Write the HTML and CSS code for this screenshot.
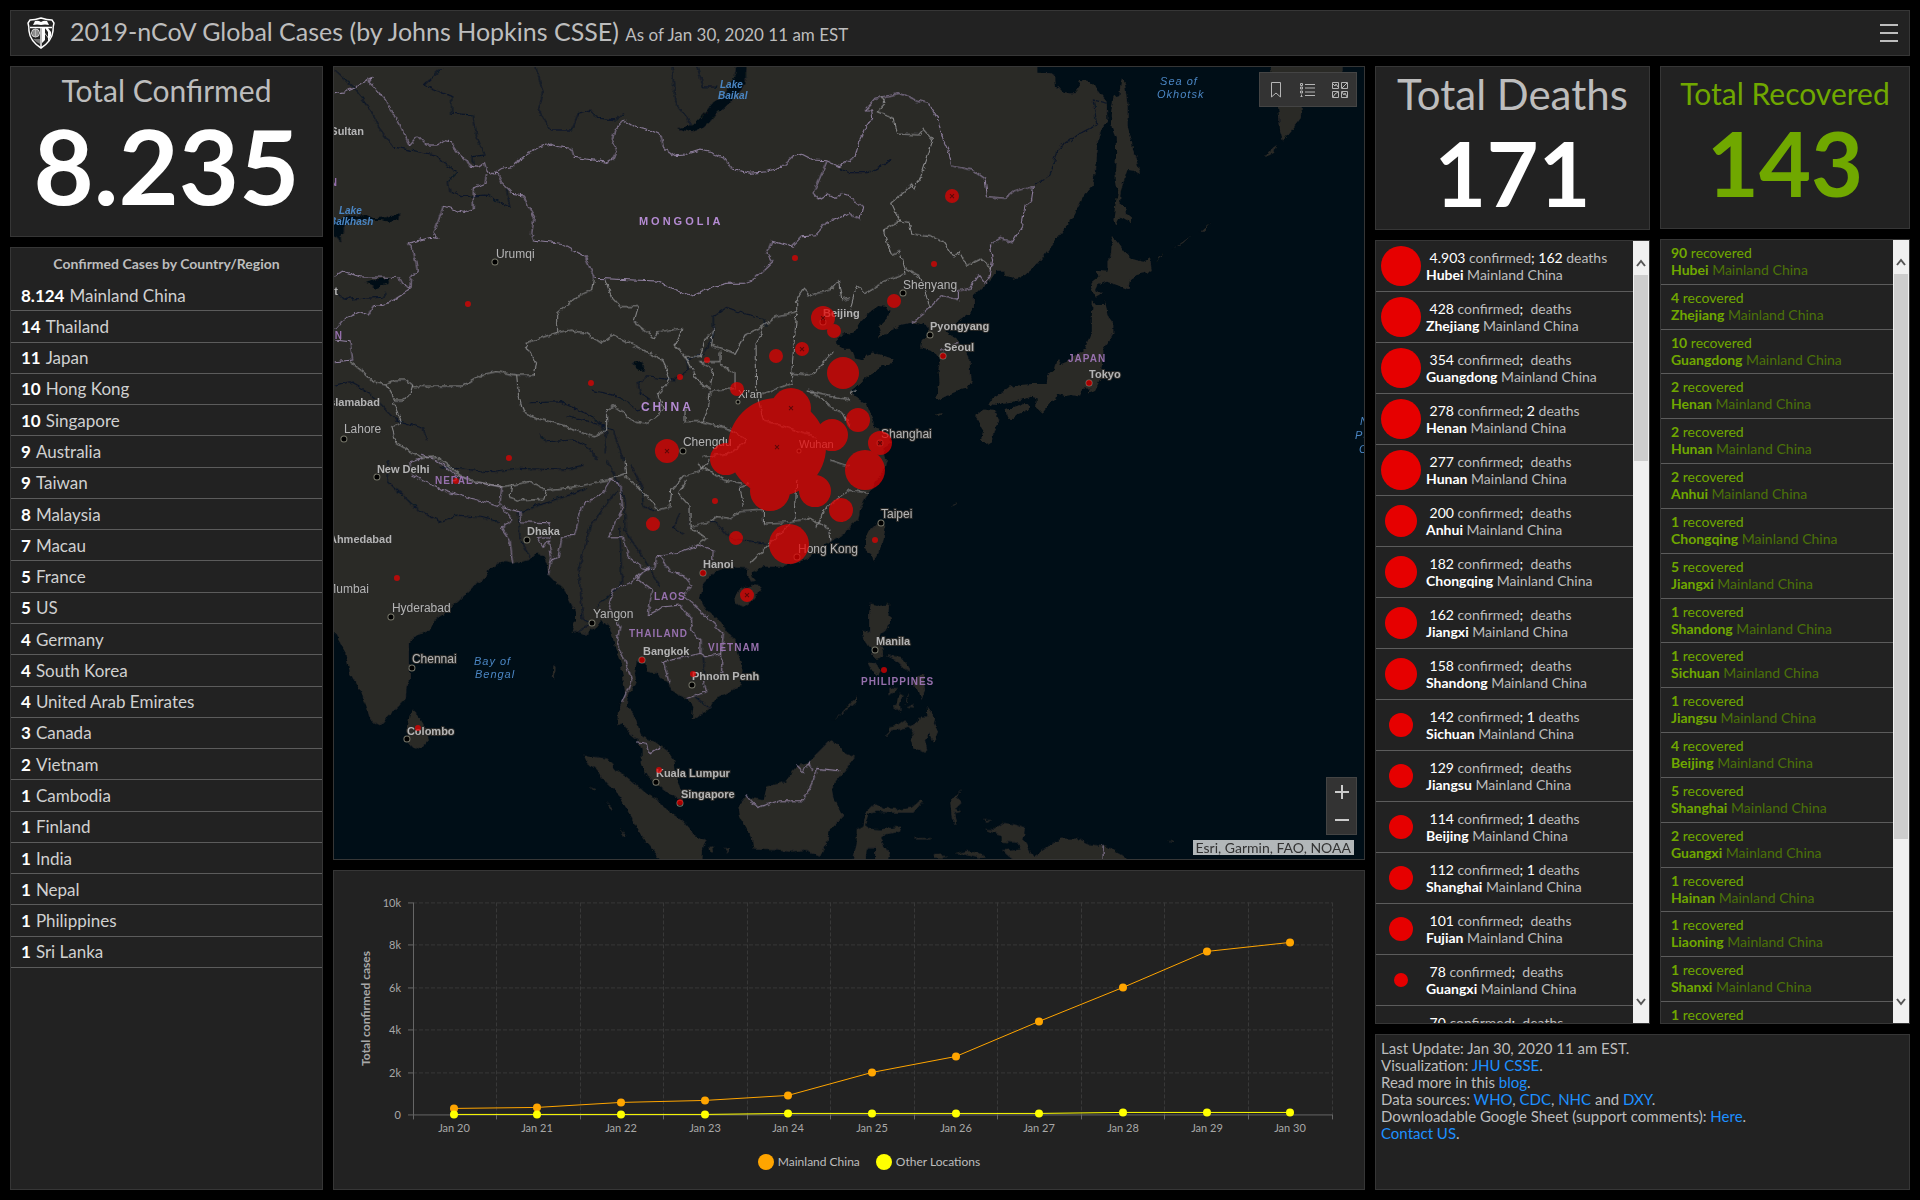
FILE: index.html
```html
<!DOCTYPE html>
<html lang="en">
<head>
    <meta charset="UTF-8">
    <meta name="viewport" content="width=device-width, initial-scale=1.0">
    <title>2019-nCoV Global Cases</title>
    <link rel="stylesheet" href="styles.css">
</head>
<body>
    <header class="panel header">
        <svg class="logo" viewBox="0 0 28 32" aria-hidden="true">
            <path d="M3 3 Q8 3 14 1 Q20 3 25 3 L27 6 Q26 9 26 14 Q25 24 14 31 Q3 24 2 14 Q2 9 1 6 Z" fill="#222" stroke="#fff" stroke-width="1.5"/>
            <path d="M8 4 Q11 3 14 5 Q17 3 20 4 L22 8 Q18 7 14 8 Q10 7 6 8 Z" fill="#fff"/>
            <path d="M3 10.500 H25 M14 10 V30" stroke="#fff" stroke-width="1.400"/>
            <circle cx="8.500" cy="16" r="4" fill="none" stroke="#ddd"/>
            <path d="M4.500 16 H12.500 M8.500 12 V20 M5 14 H12 M5 18 H12 M7 12.500 V19.500 M10 12.500 V19.500" stroke="#ddd" stroke-width=".7"/>
            <path d="M6 22 L13 22 L13 27 Q9 25 6 22" fill="#777"/>
            <path d="M15 11 h3 v5 l3 4 v-5 l-3 -4 h3 l3 4 v4 l-3 6 v-4 l-3 -4 v6 l-3 3 z" fill="#fff"/>
        </svg>
        <h1>2019-nCoV Global Cases (by Johns Hopkins CSSE) <small>As of Jan 30, 2020 11 am EST</small></h1>
        <button class="menu" type="button" aria-label="Menu"><span></span><span></span><span></span></button>
    </header>

    <main class="dashboard">
        <div class="column">
            <section class="panel total confirmed">
                <h2>Total Confirmed</h2>
                <p>8.235</p>
            </section>
            <section class="panel countries">
                <h3>Confirmed Cases by Country/Region</h3>
                <ul>
                    <li><b>8.124</b> Mainland China</li>
                    <li><b>14</b> Thailand</li>
                    <li><b>11</b> Japan</li>
                    <li><b>10</b> Hong Kong</li>
                    <li><b>10</b> Singapore</li>
                    <li><b>9</b> Australia</li>
                    <li><b>9</b> Taiwan</li>
                    <li><b>8</b> Malaysia</li>
                    <li><b>7</b> Macau</li>
                    <li><b>5</b> France</li>
                    <li><b>5</b> US</li>
                    <li><b>4</b> Germany</li>
                    <li><b>4</b> South Korea</li>
                    <li><b>4</b> United Arab Emirates</li>
                    <li><b>3</b> Canada</li>
                    <li><b>2</b> Vietnam</li>
                    <li><b>1</b> Cambodia</li>
                    <li><b>1</b> Finland</li>
                    <li><b>1</b> India</li>
                    <li><b>1</b> Nepal</li>
                    <li><b>1</b> Philippines</li>
                    <li><b>1</b> Sri Lanka</li>
                </ul>
            </section>
        </div>

        <div class="column">
            <section class="panel map">
                <svg class="map-canvas" viewBox="0 0 1030 792" preserveAspectRatio="xMidYMid slice" role="img" aria-label="Map of confirmed cases in Asia">
                    <defs>
                        <filter id="rough" x="0" y="0" width="1030" height="792" filterUnits="userSpaceOnUse">
                            <feTurbulence type="fractalNoise" baseFrequency="0.15" numOctaves="3" seed="4" result="noise"/>
                            <feDisplacementMap in="SourceGraphic" in2="noise" scale="5" xChannelSelector="R" yChannelSelector="G"/>
                        </filter>
                        <path id="x" d="M-2 -2 L2 2 M2 -2 L-2 2"/>
                    </defs>

                    <g filter="url(#rough)">
                    <g transform="translate(-4 -7) scale(.33333)">
                        <!-- land -->
                        <g class="land">
                            <path d="M-30 -30 H1562 V818 L1535 820 L1520 835 L1522 855 L1540 866 L1562 866 V1202 H-30 Z"/>
                            <g transform="translate(1560 0)">
                                <path d="M-4 -30 H562 V38 L605 40 L612 45 L615 85 L625 78 L640 95 L660 100 L672 100 L680 90 L690 75 L686 60 L715 62 L735 75 L745 95 L770 125 L772 180 L752 210 L745 240 L738 280 L735 330 L728 378 L700 410 L688 435 L672 465 L640 510 L605 555 L575 595 L555 620 L525 645 L490 656 L465 650 L462 632 L440 632 L425 655 L405 675 L372 708 L372 745 L355 760 L320 785 L290 815 L320 835 L328 850 L345 870 L362 900 L363 940 L365 965 L350 985 L330 990 L305 1000 L265 1020 L255 1015 L265 990 L268 965 L265 925 L270 900 L258 880 L240 868 L210 862 L215 840 L235 825 L232 800 L210 790 L185 788 L150 795 L120 810 L105 828 L80 835 L95 810 L85 800 L95 790 L115 770 L118 755 L108 740 L85 738 L60 755 L35 780 L20 805 L10 818 L-4 820 Z"/>
                                <path d="M-4 866 L10 875 L15 895 L35 900 L45 885 L70 877 L95 885 L130 897 L128 912 L95 918 L80 935 L60 945 L40 960 L25 975 L5 990 L10 1005 L30 1020 L50 1030 L60 1055 L70 1085 L72 1100 L90 1105 L115 1130 L122 1150 L100 1165 L110 1202 H-4 Z"/>
                                <path d="M815 52 L825 70 L828 100 L833 140 L833 200 L845 240 L850 275 L862 310 L870 342 L850 332 L832 330 L822 360 L812 395 L810 425 L825 445 L828 462 L842 468 L843 487 L830 480 L812 470 L802 480 L795 500 L790 480 L795 440 L803 400 L798 370 L795 330 L798 280 L797 235 L785 205 L782 165 L790 110 L808 105 L810 80 Z"/>
                                <path d="M785 528 L800 540 L825 575 L850 598 L880 605 L900 595 L905 630 L885 640 L860 645 L840 660 L835 688 L800 675 L770 665 L745 675 L738 690 L755 700 L735 712 L722 680 L725 665 L745 650 L740 632 L775 635 L775 605 L783 580 Z"/>
                                <path d="M728 720 L740 735 L765 735 L766 720 L772 765 L790 790 L790 820 L775 845 L757 870 L755 920 L750 960 L735 990 L715 998 L718 985 L700 985 L690 1010 L665 1005 L645 1008 L620 1000 L615 1020 L600 1030 L578 1058 L558 1040 L560 1015 L540 1010 L520 1018 L490 1025 L460 1028 L440 1035 L415 1032 L420 1022 L445 1005 L475 982 L510 975 L545 972 L590 972 L592 945 L612 925 L618 900 L630 898 L625 915 L650 905 L680 885 L705 865 L715 835 L725 810 L725 770 Z"/>
                                <path d="M467 1050 L500 1040 L525 1025 L542 1040 L530 1052 L505 1062 L480 1083 L470 1070 Z M372 1068 L400 1045 L435 1050 L448 1080 L432 1110 L425 1145 L410 1155 L392 1140 L400 1110 L385 1085 Z"/>
                                <path d="M1260 -30 H1478 V30 L1470 40 L1380 80 L1355 140 L1352 175 L1325 210 L1298 243 L1290 215 L1285 150 L1262 30 Z M1245 292 L1255 275 L1280 258 L1270 280 Z M915 607 L940 575 L932 592 Z M965 570 L1025 525 L1000 548 Z M1050 515 L1080 490 L1062 515 Z M255 1065 L275 1058 L270 1068 Z"/>
                            </g>
                            <g transform="translate(0 1200)">
                                <path d="M-30 -4 H1562 V203 L1530 230 L1500 245 L1470 265 L1435 295 L1400 308 L1350 320 L1300 320 L1280 330 L1265 335 L1268 350 L1278 362 L1260 365 L1250 345 L1252 325 L1215 322 L1190 320 L1160 330 L1135 355 L1120 370 L1115 395 L1110 415 L1130 450 L1165 480 L1215 540 L1225 580 L1238 630 L1230 680 L1195 700 L1160 715 L1140 745 L1110 765 L1085 777 L1090 740 L1070 715 L1045 705 L1025 690 L1015 670 L1000 660 L980 640 L950 635 L950 610 L920 605 L915 640 L920 670 L895 700 L890 740 L910 760 L925 800 L935 830 L975 845 L1010 870 L1033 900 L1040 950 L1055 1000 L1060 1020 L1030 1010 L985 975 L950 945 L935 910 L935 870 L925 840 L895 815 L880 790 L862 795 L863 760 L875 725 L885 700 L880 660 L870 600 L855 560 L845 520 L835 500 L815 480 L800 500 L770 525 L745 515 L725 518 L735 480 L735 455 L710 405 L700 380 L680 370 L655 345 L650 310 L640 285 L620 280 L600 300 L545 310 L520 305 L475 330 L470 350 L430 380 L390 420 L350 455 L315 480 L300 510 L265 525 L240 545 L240 600 L240 660 L230 680 L228 715 L200 745 L175 768 L150 795 L120 780 L110 740 L90 690 L60 640 L45 575 L20 530 L-30 440 Z"/>
                                <path d="M245 748 L265 765 L285 800 L297 840 L280 860 L255 868 L238 850 L232 810 L238 765 Z M1215 405 L1235 385 L1265 375 L1295 378 L1285 400 L1265 425 L1240 440 L1218 430 Z"/>
                                <path d="M760 882 L790 890 L830 895 L860 930 L890 950 L920 975 L950 1000 L980 1015 L1010 1050 L1040 1070 L1060 1085 L1085 1115 L1100 1130 L1130 1140 L1120 1160 L1115 1230 H1020 L960 1160 L930 1120 L900 1065 L870 1010 L830 970 L800 930 L770 905 Z"/>
                                <path d="M1250 1010 L1300 1020 L1310 980 L1365 965 L1400 920 L1440 900 L1470 870 L1500 840 L1525 850 L1545 880 L1575 892 L1555 920 L1530 950 L1505 985 L1510 1010 L1540 1070 L1500 1110 L1490 1150 L1470 1190 L1420 1170 L1380 1175 L1330 1170 L1270 1168 L1265 1130 L1230 1070 L1225 1040 Z"/>
                                <path d="M670 615 L677 620 L675 655 L668 650 Z M778 978 L797 988 L790 990 Z M825 1025 L848 1045 L842 1052 Z M872 1105 L890 1130 L882 1132 Z M1138 1160 L1150 1158 L1152 1178 L1142 1175 Z M1182 1162 L1198 1168 L1192 1180 Z M1508 785 L1585 705 L1575 728 Z"/>
                            </g>
                            <g transform="translate(1560 1200)">
                                <path d="M-4 -4 H110 L105 20 L95 40 L60 95 L45 120 L30 150 L25 180 L-4 203 Z"/>
                                <path d="M80 190 L107 200 L100 240 L85 280 L72 305 L65 285 L45 265 L45 240 L60 210 Z"/>
                                <path d="M62 430 L90 437 L118 432 L115 465 L124 480 L110 510 L95 520 L85 545 L98 570 L100 590 L80 600 L65 585 L70 570 L55 560 L45 545 L37 510 L57 518 L57 460 Z"/>
                                <path d="M55 610 L80 612 L92 635 L80 648 L68 635 Z M105 585 L150 590 L170 615 L182 635 L160 625 L135 600 Z M115 680 L145 685 L115 710 Z M195 650 L220 645 L225 690 L215 720 L205 690 L190 680 Z M145 700 L158 705 L150 730 L152 758 L128 740 L140 728 Z M172 740 L195 728 L190 742 Z M162 737 L178 695 L174 715 Z M300 140 L322 126 L318 134 Z"/>
                                <path d="M230 740 L255 770 L252 790 L264 815 L250 848 L240 820 L225 840 L232 870 L222 878 L190 862 L180 835 L190 815 L175 800 L150 808 L125 810 L110 830 L118 802 L145 795 L165 780 L180 798 L205 785 L210 770 L232 768 Z"/>
                                <path d="M40 1100 L45 1060 L75 1030 L100 1042 L150 1048 L185 1042 L215 1017 L218 1025 L190 1058 L130 1058 L80 1055 L55 1062 L45 1095 L60 1105 L90 1108 L130 1102 L155 1098 L150 1115 L110 1122 L90 1135 L120 1185 L110 1230 H75 V1165 H50 L45 1230 H0 L20 1150 L20 1110 Z"/>
                                <path d="M335 988 L320 1010 L335 1025 L315 1045 L335 1055 L312 1060 L320 1095 L305 1075 L300 1020 Z M192 1132 L245 1134 L240 1138 L195 1138 Z M250 1182 L275 1180 L288 1195 L255 1196 Z M312 1182 L350 1172 L385 1178 L408 1192 L385 1196 L345 1184 Z M950 1140 L970 1140 L968 1146 Z"/>
                                <path d="M400 1078 L425 1080 L410 1085 Z M400 1105 L430 1108 L460 1088 L490 1092 L525 1105 L520 1140 L550 1190 L580 1170 L605 1150 L635 1135 L680 1135 L720 1152 L770 1160 L810 1182 L880 1230 H450 L490 1200 L455 1170 L515 1165 L500 1148 L455 1145 L455 1125 L430 1118 Z"/>
                            </g>
                        </g>

                        <!-- lakes -->
                        <path class="lake" d="M1222 0 H1250 L1248 50 L1238 85 L1208 118 L1185 142 L1160 160 L1140 185 L1120 203 L1085 217 L1050 208 L1045 204 L1065 200 L1090 195 L1105 180 L1130 155 L1150 130 L1180 112 L1200 75 L1215 45 Z M-10 490 L60 468 L110 465 L130 475 L170 472 L208 460 L205 480 L180 486 L150 480 L100 478 L60 485 L42 500 L42 520 L32 525 L34 548 L20 530 L-10 515 Z M105 668 L140 658 L177 655 L172 672 L140 684 Z M908 908 L935 903 L945 928 L925 930 Z"/>

                        <!-- rivers -->
                        <path class="river" d="M15 30 L65 75 L120 145 L145 200 L190 260 L315 285 L380 340 L355 365 L360 395 L395 410 L470 405 L540 442 L530 390 M335 28 L282 75 L365 110 L365 160 L430 165 L440 230 L465 285 L425 290 L430 315 M612 0 L640 100 L625 150 L665 210 L725 210 L745 160 L780 150 L800 175 L860 180 L878 160 M1025 0 L1035 130 L1085 195 M1095 0 L1120 80 L1160 82 M785 990 L870 1010 L920 1050 L960 1040 M1070 900 L1075 930 L1030 960 L950 950 L925 970 L930 1000 L960 1020 M1070 900 L1120 880 L1150 830 L1150 770 L1190 742 L1240 760 L1300 775 L1308 800 M600 1028 L690 1025 L790 1070 L830 1120 L825 1180 M710 1070 L780 1085 L850 1110 L880 1200 M15 975 L60 965 L120 1000 L200 1080 L280 1105 L290 1140 M630 1120 L650 1145 L730 1140 L780 1165 L800 1200 M15 690 L40 718 L160 712 L168 698"/>
                        <path class="river" transform="translate(1560 0)" d="M-30 325 L0 338 L55 338 L125 300 M555 375 L600 345 L620 270 L690 220 L740 195 L730 120 L770 130"/>
                        <path class="river" transform="translate(0 1200)" d="M175 0 L175 65 L260 145 L330 185 L380 165 L450 172 L510 185 M565 155 L570 235 L600 290 M330 20 L480 35 L560 25 L700 30 L760 15 M570 155 L700 110 L770 85 M830 0 L860 60 L885 120 L885 210 L950 310 L990 380 M900 10 L935 80 L940 140 L980 150 M860 90 L780 200 L745 330 L760 480 L785 488 L745 515 M870 200 L875 370 L800 440 M1050 160 L1030 200 L1060 220 M1140 185 L1160 190 L1200 235 L1310 250 M1095 710 L1140 745 M1120 590 L1125 660"/>

                        <!-- country borders -->
                        <path class="border" d="M-10 105 L45 95 L70 85 L110 60 L130 48 L115 65 L130 80 L165 118 L208 190 L238 255 L262 228 L288 255 L325 255 L345 242 L362 245 L382 275 L405 295 L418 318 L445 322 L463 308 L470 330 L490 342 L515 325 L545 320 L565 303 L600 278 L630 260 L660 252 L685 260 L725 265 L732 292 L790 300 L830 307 L850 295 L860 270 L847 240 L855 208 L882 180 L915 200 L960 210 L993 225 L1000 262 L1035 287 L1065 285 L1110 270 L1150 280 L1188 298 L1208 328 L1260 340 L1310 335 L1355 322 L1390 290 L1415 282 L1450 300 L1490 302 L1528 320 L1560 300 M470 342 L465 370 L430 385 L430 445 L400 457 L340 438 L312 520 L325 535 L300 532 L235 550 L250 570 L262 630 L245 650 L243 685 L215 705 L175 730 L130 738 L115 765 L90 755 L40 778 L15 810 M490 342 L505 340 L515 370 L545 400 L580 405 L595 440 L613 470 L605 520 L610 540 L695 550 L765 590 L793 655 L980 663 L1040 693 L1090 708 L1150 680 L1190 670 L1240 670 L1272 658 L1328 605 L1310 580 L1325 543 L1385 560 L1415 530 L1455 527 L1490 487 L1535 470 L1560 460 M12 650 L38 633 L90 650 L205 652 L215 670 L243 685 M15 840 L60 845 L68 900 L15 905 M1490 305 L1450 400 L1465 417 L1490 402 L1515 415 L1535 400 L1560 408"/>
                        <path class="border" transform="translate(1560 0)" d="M0 300 L15 290 L25 250 L50 200 L68 175 L65 150 L43 150 L75 115 L150 100 L200 120 L235 130 L262 175 L280 240 L298 280 L305 318 L370 330 L405 355 L412 410 L465 415 L490 395 L550 380 L545 420 L525 435 L515 500 L488 545 L450 535 L418 555 L428 600 L420 650 L405 670 L385 645 L360 685 L325 692 L325 718 L275 705 L240 742 L185 788 M0 408 L38 440 L30 475 L0 462 M270 870 L325 850"/>
                        <path class="border" transform="translate(0 1200)" d="M275 -5 L240 10 L245 45 L350 95 L510 137 L515 80 L430 65 L380 45 L320 0 L275 -15 M515 140 L545 180 L515 205 L540 240 L548 310 M520 140 L570 155 L572 185 L660 188 L658 230 L620 232 L640 262 L655 240 L665 290 L655 345 M665 300 L685 290 L695 235 L730 225 L755 135 L820 100 L840 55 L870 75 L875 150 L835 230 L880 230 L895 290 L940 325 L975 325 L980 290 L1010 285 L1050 275 L1105 255 L1150 270 L1148 300 M955 320 L930 345 L900 370 L850 385 L835 440 L870 500 L860 550 L885 600 L905 660 L875 725 M930 340 L925 360 L965 390 L955 465 L1000 440 L1050 435 L1085 480 L1085 510 L1110 540 L1110 580 L1000 605 L1018 670 M990 290 L1020 335 L1060 345 L1085 375 L1060 405 L1120 460 L1180 520 L1175 580 L1125 590 L1110 580 M1175 580 L1175 640 L1120 660 L1130 695 L1070 715 M922 845 L950 850 L960 878 L990 860 M1250 1005 L1280 1042 L1350 1022 L1420 1022 L1450 960 L1460 925 L1530 932 M1400 915 L1420 935 L1435 905 L1445 930"/>
                        <path class="border" d="M2319 2358 V2400"/>

                        <!-- province borders -->
                        <path class="province" d="M60 905 L100 935 L130 965 L168 975 L195 1020 L215 1020 L240 1005 L248 975 L230 960 L195 960 L168 972 M248 980 L320 978 L395 978 L450 945 L500 935 L560 945 L565 1000 L580 1055 L620 1075 L700 1095 L790 1130 L830 1110 L830 1050 L850 1038 L880 1055 L900 1080 L950 1090 L1000 1050 L985 1000 L1020 960 L1000 900 L960 880 L910 855 L850 825 L815 850 L770 820 L720 810 L680 818 L585 850 L620 910 L612 945 L560 945 M680 818 L680 762 L740 710 L785 690 L790 658 M825 658 L845 712 L870 740 L925 740 L912 785 L975 835 L985 815 L1058 805 L1035 855 L1065 890 L1110 890 L1125 840 L1150 808 L1145 855 L1215 880 L1245 825 L1300 798 L1335 770 L1400 755 L1400 715 L1420 685 L1440 705 L1500 690 L1525 660 L1535 720 L1560 715 M1065 890 L1110 970 L1140 985 L1150 930 L1110 905 L1170 905 L1170 875 M1170 910 L1215 940 L1215 985 L1140 995 L1135 1050 L1115 1085 L1065 1085 L1065 1045 M1115 1085 L1200 1108 L1250 1140 L1200 1180 L1120 1190 M1300 800 L1278 850 L1280 1000 L1300 1080 L1380 1105 L1460 1130 M1400 760 L1390 870 L1385 940 L1385 970 L1285 1005 M1385 940 L1445 945 L1510 875 M1430 990 L1470 1010 L1500 1040 L1540 1060 L1560 1100 M1430 990 L1560 1020 M190 1025 L215 1090 L185 1100 L200 1150 L275 1195 L320 1190"/>
                        <path class="province" transform="translate(1560 0)" d="M95 110 L105 130 L82 155 L130 175 L140 222 L205 225 L220 208 L248 240 L220 330 L195 390 L185 375 L125 430 L150 485 L178 490 L185 522 L240 530 L280 545 L310 590 L328 575 L350 618 L390 598 L425 625 M150 485 L100 510 L115 560 L125 585 L150 575 L165 640 L110 660 L45 700 L20 675 L0 750 M165 625 L210 650 L240 742 M0 1000 L20 990"/>
                        <path class="province" transform="translate(0 1200)" d="M320 -10 L390 45 L440 65 L515 80 L545 75 L600 65 L650 90 L740 80 L830 60 L890 40 L885 0 M545 75 L540 110 L570 122 L640 118 L650 90 M885 50 L920 75 L985 150 L1020 140 L1025 90 L1060 50 L1110 35 L1135 0 M1070 60 L1045 100 L1080 140 L1080 200 L1130 235 L1105 255 M1080 200 L1140 185 L1160 170 L1200 175 L1230 155 L1300 150 L1300 190 L1380 185 L1440 175 L1495 205 L1500 240 M1240 140 L1230 80 L1260 70 M1400 60 L1395 180 M1460 200 L1490 140 L1560 90 L1620 100 M1380 190 L1320 250 L1260 310 M1500 0 L1560 20 M1100 10 L1180 60 L1240 70"/>
                    </g>
                    </g>

                    <g class="town">
                        <circle cx="161" cy="195" r="3"/><circle cx="10" cy="372" r="3"/><circle cx="404" cy="335" r="2"/><circle cx="349" cy="384" r="3"/>
                        <circle cx="465" cy="384" r="2"/><circle cx="489" cy="255" r="3"/><circle cx="569" cy="226" r="3"/><circle cx="596" cy="268" r="3"/>
                        <circle cx="609" cy="289" r="3"/><circle cx="755" cy="316" r="3"/><circle cx="43" cy="410" r="3"/><circle cx="193" cy="473" r="3"/>
                        <circle cx="57" cy="550" r="3"/><circle cx="78" cy="601" r="3"/><circle cx="73" cy="672" r="3"/><circle cx="258" cy="556" r="3"/>
                        <circle cx="308" cy="593" r="3"/><circle cx="358" cy="618" r="3"/><circle cx="369" cy="506" r="3"/><circle cx="463" cy="490" r="3"/>
                        <circle cx="322" cy="715" r="3"/><circle cx="346" cy="736" r="3"/><circle cx="547" cy="456" r="3"/><circle cx="541" cy="583" r="3"/>
                        <circle cx="546" cy="376" r="3"/>
                    </g>

                    <g class="city">
                        <text x="162" y="191">Urumqi</text>
                        <text x="10" y="366">Lahore</text>
                        <text class="minor" x="404" y="331">Xi'an</text>
                        <text x="349" y="379">Chengdu</text>
                        <text class="minor" x="465" y="381">Wuhan</text>
                        <text x="569" y="222">Shenyang</text>
                        <text x="547" y="371">Shanghai</text>
                        <text x="35" y="526" text-anchor="end">Mumbai</text>
                        <text x="58" y="545">Hyderabad</text>
                        <text x="78" y="596">Chennai</text>
                        <text x="259" y="551">Yangon</text>
                        <text x="464" y="486">Hong Kong</text>
                        <text x="547" y="451">Taipei</text>
                    </g>
                    <g class="city capital">
                        <text x="30" y="68" text-anchor="end">Nur-Sultan</text>
                        <text x="46" y="339" text-anchor="end">Islamabad</text>
                        <text x="489" y="250">Beijing</text>
                        <text x="596" y="263">Pyongyang</text>
                        <text x="610" y="284">Seoul</text>
                        <text x="755" y="311">Tokyo</text>
                        <text x="43" y="406">New Delhi</text>
                        <text x="193" y="468">Dhaka</text>
                        <text x="58" y="476" text-anchor="end">Ahmedabad</text>
                        <text x="73" y="668">Colombo</text>
                        <text x="309" y="588">Bangkok</text>
                        <text x="358" y="613">Phnom Penh</text>
                        <text x="369" y="501">Hanoi</text>
                        <text x="322" y="710">Kuala Lumpur</text>
                        <text x="347" y="731">Singapore</text>
                        <text x="542" y="578">Manila</text>
                        <text x="4" y="228" text-anchor="end">Tashkent</text>
                    </g>
                    <g class="country">
                        <text class="wide" x="305" y="158">MONGOLIA</text>
                        <text class="wide china" x="307" y="344">CHINA</text>
                        <text x="4" y="119" text-anchor="end">KAZAKHSTAN</text>
                        <text x="9" y="272" text-anchor="end">TAJIKISTAN</text>
                        <text x="734" y="295">JAPAN</text>
                        <text x="101" y="417">NEPAL</text>
                        <text x="320" y="533">LAOS</text>
                        <text x="295" y="570">THAILAND</text>
                        <text x="374" y="584">VIETNAM</text>
                        <text x="527" y="618">PHILIPPINES</text>
                    </g>
                    <g class="water">
                        <text x="826" y="18">Sea of</text><text x="823" y="31">Okhotsk</text>
                        <text x="140" y="598">Bay of</text><text x="141" y="611">Bengal</text>
                        <text x="1026" y="358">North</text><text x="1021" y="372">Pacific</text><text x="1025" y="386">Ocean</text>
                    </g>
                    <g class="water lake-name">
                        <text x="386" y="21">Lake</text><text x="384" y="32">Baikal</text>
                        <text x="5" y="147">Lake</text><text x="-5" y="158">Balkhash</text>
                    </g>

                    <!-- confirmed cases -->
                    <g class="cases">
                        <circle cx="443" cy="380" r="49"/>
                        <circle cx="457" cy="341" r="20"/><circle cx="436" cy="424" r="20"/><circle cx="531" cy="403" r="20"/><circle cx="455" cy="477" r="20"/>
                        <circle cx="392" cy="392" r="16"/><circle cx="481" cy="424" r="16"/><circle cx="498" cy="368" r="16"/><circle cx="509" cy="306" r="16"/>
                        <circle cx="524" cy="353" r="12"/><circle cx="546" cy="376" r="12"/><circle cx="507" cy="443" r="12"/><circle cx="489" cy="251" r="12"/><circle cx="333" cy="384" r="12"/>
                        <circle cx="442" cy="289" r="7"/><circle cx="468" cy="282" r="7"/><circle cx="403" cy="322" r="7"/><circle cx="500" cy="264" r="7"/><circle cx="402" cy="471" r="7"/>
                        <circle cx="319" cy="457" r="7"/><circle cx="413" cy="528" r="7"/><circle cx="618" cy="129" r="7"/><circle cx="560" cy="234" r="7"/>
                        <circle cx="134" cy="237" r="3"/><circle cx="257" cy="316" r="3"/><circle cx="175" cy="391" r="3"/><circle cx="346" cy="310" r="3"/><circle cx="373" cy="293" r="3"/>
                        <circle cx="461" cy="191" r="3"/><circle cx="381" cy="434" r="3"/><circle cx="541" cy="473" r="3"/><circle cx="369" cy="506" r="3"/><circle cx="600" cy="197" r="3"/>
                        <circle cx="609" cy="289" r="3"/><circle cx="755" cy="316" r="3"/><circle cx="122" cy="414" r="3"/><circle cx="63" cy="511" r="3"/><circle cx="84" cy="661" r="3"/>
                        <circle cx="308" cy="593" r="3"/><circle cx="359" cy="607" r="3"/><circle cx="325" cy="703" r="3"/><circle cx="346" cy="735" r="3"/><circle cx="550" cy="603" r="3"/>
                    </g>
                    <g class="deaths-mark">
                        <use href="#x" x="443" y="380"/><use href="#x" x="457" y="341"/><use href="#x" x="546" y="376"/><use href="#x" x="489" y="251"/>
                        <use href="#x" x="333" y="384"/><use href="#x" x="468" y="282"/><use href="#x" x="413" y="528"/><use href="#x" x="618" y="129"/>
                    </g>
                </svg>

                <div class="map-tools">
                    <button type="button" aria-label="Bookmarks">
                        <svg viewBox="0 0 16 16"><path d="M3.500 .5 H12.500 V15 L8 11 L3.500 15 Z"/></svg>
                    </button>
                    <button type="button" aria-label="Legend">
                        <svg viewBox="0 0 16 16"><path d="M5 2.500 H15 M5 6 H15 M5 10 H15 M5 13.500 H15"/><path d="M.5 1.500 h2 v2 h-2 z M.5 5 h2 v2 h-2 z M.5 9 h2 v2 h-2 z M1.500 12.500 v2 M.5 14.500 h2"/></svg>
                    </button>
                    <button type="button" aria-label="Basemaps">
                        <svg viewBox="0 0 16 16"><path d="M.5 .5 h6 v6 h-6 z M9.500 .5 h6 v6 h-6 z M.5 9.500 h6 v6 h-6 z M9.500 9.500 h6 v6 h-6 z M1 2 l2 2 1 -2 2 3 M10 6 l2 -2 3 -3 M1 15 l2 -3 3 -2 M10 10 l2 3 1 -2 2 4"/></svg>
                    </button>
                </div>
                <div class="map-corner">
                    <div class="map-zoom">
                        <button type="button" aria-label="Zoom in"><svg viewBox="0 0 16 16"><path d="M8 1 V15 M1 8 H15"/></svg></button>
                        <button type="button" aria-label="Zoom out"><svg viewBox="0 0 16 16"><path d="M1 8 H15"/></svg></button>
                    </div>
                    <span class="map-credit">Esri, Garmin, FAO, NOAA</span>
                </div>
            </section>

            <section class="panel chart">
                <svg viewBox="0 0 1030 270" role="img" aria-label="Total confirmed cases by day">
                    <path class="grid" d="M79 31.500 H998 M79 73.500 H998 M79 116.500 H998 M79 158.500 H998 M79 201.500 H998"/>
                    <path class="grid" d="M162.500 31 V243 M246.500 31 V243 M329.500 31 V243 M413.500 31 V243 M496.500 31 V243 M580.500 31 V243 M663.500 31 V243 M747.500 31 V243 M830.500 31 V243 M914.500 31 V243 M998.500 31 V243"/>
                    <path class="axis" d="M79.500 31 V248 M74 243.500 H998 M74 31.500 h5 M74 73.500 h5 M74 116.500 h5 M74 158.500 h5 M74 201.500 h5 M162.500 243 v5 M246.500 243 v5 M329.500 243 v5 M413.500 243 v5 M496.500 243 v5 M580.500 243 v5 M663.500 243 v5 M747.500 243 v5 M830.500 243 v5 M914.500 243 v5 M998.500 243 v5"/>
                    <g class="label" text-anchor="end">
                        <text x="67" y="36">10k</text>
                        <text x="67" y="78">8k</text>
                        <text x="67" y="121">6k</text>
                        <text x="67" y="163">4k</text>
                        <text x="67" y="206">2k</text>
                        <text x="67" y="248">0</text>
                    </g>
                    <g class="label" text-anchor="middle">
                        <text x="120" y="261">Jan 20</text>
                        <text x="203" y="261">Jan 21</text>
                        <text x="287" y="261">Jan 22</text>
                        <text x="371" y="261">Jan 23</text>
                        <text x="454" y="261">Jan 24</text>
                        <text x="538" y="261">Jan 25</text>
                        <text x="622" y="261">Jan 26</text>
                        <text x="705" y="261">Jan 27</text>
                        <text x="789" y="261">Jan 28</text>
                        <text x="873" y="261">Jan 29</text>
                        <text x="956" y="261">Jan 30</text>
                        <text class="axis-title" transform="translate(36 137) rotate(-90)">Total confirmed cases</text>
                    </g>
                    <g class="china-line">
                        <polyline points="120,237 203,236 287,231 371,229 454,224 538,201 622,185 705,150 789,116 873,80 956,71"/>
                        <circle cx="120" cy="237" r="4"/><circle cx="203" cy="236" r="4"/><circle cx="287" cy="231" r="4"/><circle cx="371" cy="229" r="4"/>
                        <circle cx="454" cy="224" r="4"/><circle cx="538" cy="201" r="4"/><circle cx="622" cy="185" r="4"/><circle cx="705" cy="150" r="4"/>
                        <circle cx="789" cy="116" r="4"/><circle cx="873" cy="80" r="4"/><circle cx="956" cy="71" r="4"/>
                    </g>
                    <g class="other-line">
                        <polyline points="120,243 371,243 454,242 705,242 789,241 956,241"/>
                        <circle cx="120" cy="243" r="4"/><circle cx="203" cy="243" r="4"/><circle cx="287" cy="243" r="4"/><circle cx="371" cy="243" r="4"/>
                        <circle cx="454" cy="242" r="4"/><circle cx="538" cy="242" r="4"/><circle cx="622" cy="242" r="4"/><circle cx="705" cy="242" r="4"/>
                        <circle cx="789" cy="241" r="4"/><circle cx="873" cy="241" r="4"/><circle cx="956" cy="241" r="4"/>
                    </g>
                </svg>
                <div class="legend">
                    <span class="key china">Mainland China</span>
                    <span class="key other">Other Locations</span>
                </div>
            </section>
        </div>

        <div class="column">
            <div class="pair">
                <div class="column">
                    <section class="panel total deaths">
                        <h2>Total Deaths</h2>
                        <p>171</p>
                    </section>
                    <section class="panel scroll-box">
                        <ul class="provinces">
                            <li><i class="dot large"></i><p>&nbsp;<b>4.903</b> confirmed<b>; 162</b> deaths<br><strong>Hubei</strong> Mainland China</p></li>
                            <li><i class="dot large"></i><p>&nbsp;<b>428</b> confirmed<b>;</b>&nbsp; deaths<br><strong>Zhejiang</strong> Mainland China</p></li>
                            <li><i class="dot large"></i><p>&nbsp;<b>354</b> confirmed<b>;</b>&nbsp; deaths<br><strong>Guangdong</strong> Mainland China</p></li>
                            <li><i class="dot large"></i><p>&nbsp;<b>278</b> confirmed<b>; 2</b> deaths<br><strong>Henan</strong> Mainland China</p></li>
                            <li><i class="dot large"></i><p>&nbsp;<b>277</b> confirmed<b>;</b>&nbsp; deaths<br><strong>Hunan</strong> Mainland China</p></li>
                            <li><i class="dot medium"></i><p>&nbsp;<b>200</b> confirmed<b>;</b>&nbsp; deaths<br><strong>Anhui</strong> Mainland China</p></li>
                            <li><i class="dot medium"></i><p>&nbsp;<b>182</b> confirmed<b>;</b>&nbsp; deaths<br><strong>Chongqing</strong> Mainland China</p></li>
                            <li><i class="dot medium"></i><p>&nbsp;<b>162</b> confirmed<b>;</b>&nbsp; deaths<br><strong>Jiangxi</strong> Mainland China</p></li>
                            <li><i class="dot medium"></i><p>&nbsp;<b>158</b> confirmed<b>;</b>&nbsp; deaths<br><strong>Shandong</strong> Mainland China</p></li>
                            <li><i class="dot small"></i><p>&nbsp;<b>142</b> confirmed<b>; 1</b> deaths<br><strong>Sichuan</strong> Mainland China</p></li>
                            <li><i class="dot small"></i><p>&nbsp;<b>129</b> confirmed<b>;</b>&nbsp; deaths<br><strong>Jiangsu</strong> Mainland China</p></li>
                            <li><i class="dot small"></i><p>&nbsp;<b>114</b> confirmed<b>; 1</b> deaths<br><strong>Beijing</strong> Mainland China</p></li>
                            <li><i class="dot small"></i><p>&nbsp;<b>112</b> confirmed<b>; 1</b> deaths<br><strong>Shanghai</strong> Mainland China</p></li>
                            <li><i class="dot small"></i><p>&nbsp;<b>101</b> confirmed<b>;</b>&nbsp; deaths<br><strong>Fujian</strong> Mainland China</p></li>
                            <li><i class="dot tiny"></i><p>&nbsp;<b>78</b> confirmed<b>;</b>&nbsp; deaths<br><strong>Guangxi</strong> Mainland China</p></li>
                            <li><i class="dot tiny"></i><p>&nbsp;<b>70</b> confirmed<b>;</b>&nbsp; deaths<br>&nbsp;</p></li>
                        </ul>
                        <div class="scrollbar" aria-hidden="true">
                            <svg viewBox="0 0 16 34"><path d="M4 25 L8 20 L12 25"/></svg>
                            <div class="track"><div class="thumb" style="height: 26%"></div></div>
                            <svg viewBox="0 0 16 34"><path d="M4 10 L8 15 L12 10"/></svg>
                        </div>
                    </section>
                </div>

                <div class="column">
                    <section class="panel total recovered">
                        <h2>Total Recovered</h2>
                        <p>143</p>
                    </section>
                    <section class="panel scroll-box">
                        <ul class="recoveries">
                            <li><b>90</b> recovered<br><b>Hubei</b> <span>Mainland China</span></li>
                            <li><b>4</b> recovered<br><b>Zhejiang</b> <span>Mainland China</span></li>
                            <li><b>10</b> recovered<br><b>Guangdong</b> <span>Mainland China</span></li>
                            <li><b>2</b> recovered<br><b>Henan</b> <span>Mainland China</span></li>
                            <li><b>2</b> recovered<br><b>Hunan</b> <span>Mainland China</span></li>
                            <li><b>2</b> recovered<br><b>Anhui</b> <span>Mainland China</span></li>
                            <li><b>1</b> recovered<br><b>Chongqing</b> <span>Mainland China</span></li>
                            <li><b>5</b> recovered<br><b>Jiangxi</b> <span>Mainland China</span></li>
                            <li><b>1</b> recovered<br><b>Shandong</b> <span>Mainland China</span></li>
                            <li><b>1</b> recovered<br><b>Sichuan</b> <span>Mainland China</span></li>
                            <li><b>1</b> recovered<br><b>Jiangsu</b> <span>Mainland China</span></li>
                            <li><b>4</b> recovered<br><b>Beijing</b> <span>Mainland China</span></li>
                            <li><b>5</b> recovered<br><b>Shanghai</b> <span>Mainland China</span></li>
                            <li><b>2</b> recovered<br><b>Guangxi</b> <span>Mainland China</span></li>
                            <li><b>1</b> recovered<br><b>Hainan</b> <span>Mainland China</span></li>
                            <li><b>1</b> recovered<br><b>Liaoning</b> <span>Mainland China</span></li>
                            <li><b>1</b> recovered<br><b>Shanxi</b> <span>Mainland China</span></li>
                            <li><b>1</b> recovered</li>
                        </ul>
                        <div class="scrollbar" aria-hidden="true">
                            <svg viewBox="0 0 16 34"><path d="M4 25 L8 20 L12 25"/></svg>
                            <div class="track"><div class="thumb" style="height: 79%"></div></div>
                            <svg viewBox="0 0 16 34"><path d="M4 10 L8 15 L12 10"/></svg>
                        </div>
                    </section>
                </div>
            </div>

            <section class="panel info">
                <p>Last Update: Jan 30, 2020 11 am EST.</p>
                <p>Visualization: <a href="#">JHU CSSE</a>.</p>
                <p>Read more in this <a href="#">blog</a>.</p>
                <p>Data sources: <a href="#">WHO</a>, <a href="#">CDC</a>, <a href="#">NHC</a> and <a href="#">DXY</a>.</p>
                <p>Downloadable Google Sheet (support comments): <a href="#">Here</a>.</p>
                <p><a href="#">Contact US</a>.</p>
            </section>
        </div>
    </main>
</body>
</html>
```
FILE: styles.css
```css
* {
    box-sizing: border-box;
}

body {
    margin: 0;
    padding: 10px;
    height: 100vh;
    display: flex;
    flex-direction: column;
    gap: 10px;
    background-color: #000;
    color: #bdbdbd;
    font-family: Lato, "Liberation Sans", sans-serif;
    font-size: 14px;
    line-height: 17px;
}

h1, h2, h3, p, ul {
    margin: 0;
    padding: 0;
    font-weight: normal;
}

ul {
    list-style: none;
}

button {
    padding: 0;
    border: 0;
    background: none;
    cursor: pointer;
}

.panel {
    background-color: #222;
    border: 1px solid #363636;
}

.header {
    display: flex;
    align-items: center;
    height: 46px;
    padding: 0 11px 0 16px;
}

.logo {
    width: 28px;
    height: 32px;
    margin-right: 15px;
}

.header h1 {
    flex: 1;
    font-size: 25px;
    line-height: 32px;
}

.header small {
    font-size: 17px;
}

.menu {
    width: 18px;
    height: 18px;
    display: flex;
    flex-direction: column;
    justify-content: space-between;
}

.menu span {
    width: 18px;
    height: 2px;
    background-color: #bdbdbd;
}

.dashboard {
    flex: 1;
    min-height: 0;
    display: grid;
    grid-template-columns: 313fr 1032fr 535fr;
    gap: 10px;
}

.column {
    display: flex;
    flex-direction: column;
    gap: 10px;
    min-width: 0;
    min-height: 0;
}

.pair {
    flex: 1;
    min-height: 0;
    display: grid;
    grid-template-columns: 275fr 250fr;
    gap: 10px;
}

/* totals */
.total {
    text-align: center;
}

.total h2 {
    font-size: 30px;
    line-height: 36px;
}

.total p {
    font-weight: bold;
    color: #fff;
}

.confirmed {
    height: 171px;
    padding-top: 5px;
}

.confirmed p {
    font-size: 104px;
    line-height: 114px;
}

.deaths {
    height: 164px;
    padding-top: 7px;
}

.total.deaths h2 {
    font-size: 42px;
    line-height: 40px;
}

.deaths p,
.recovered p {
    font-size: 90px;
    line-height: 116px;
}

.recovered {
    height: 163px;
    padding-top: 8px;
}

.recovered p {
    line-height: 102px;
}

.recovered h2,
.recovered p {
    color: #70a800;
}

/* countries */
.countries {
    flex: 1;
    overflow: hidden;
}

.countries h3 {
    padding: 8px 0 8px;
    text-align: center;
    font-weight: bold;
    font-size: 14px;
    line-height: 16px;
}

.countries ul {
    display: grid;
    grid-auto-rows: 1fr;
    height: 688px;
}

.countries li {
    display: flex;
    align-items: center;
    gap: 5px;
    padding-left: 10px;
    border-bottom: 1px solid #5c5c5c;
    font-size: 17px;
    color: #d0d0d0;
}

.countries b {
    color: #fff;
}

/* map */
.map {
    position: relative;
    flex: 795;
    min-height: 0;
    overflow: hidden;
    background-color: #000e17;
}

.map-canvas {
    display: block;
    width: 100%;
    height: 100%;
    font-family: "Liberation Sans", Arial, sans-serif;
}

.land {
    fill: #2a2a28;
}

.lake {
    fill: #000e17;
}

.river,
.border,
.province {
    fill: none;
    stroke-width: 3;
}

.river {
    stroke: #07142a;
}

.border {
    stroke: #9484a3;
}

.province {
    stroke: #929292;
}

.town {
    fill: #000;
    stroke: #77776a;
}

.city {
    font-size: 12px;
    fill: #b4b4b4;
    stroke: #2a2a28;
    stroke-width: 2px;
    paint-order: stroke;
}

.city .minor {
    font-size: 11px;
}

.capital {
    font-size: 11px;
    font-weight: bold;
}

.country {
    font-size: 10px;
    font-weight: bold;
    letter-spacing: 1px;
    fill: #9670ad;
}

.country .wide {
    font-size: 11px;
    letter-spacing: 3px;
    fill: #b58bd3;
}

.country .china {
    font-size: 12px;
}

.water {
    font-size: 11px;
    font-style: italic;
    letter-spacing: 1px;
    fill: #4a86c4;
}

.lake-name {
    font-size: 10px;
    font-weight: bold;
    letter-spacing: 0;
}

.cases {
    fill: #e60000;
    opacity: .73;
}

.deaths-mark {
    stroke: #5c0808;
}

.map-tools {
    position: absolute;
    top: 5px;
    right: 7px;
    display: flex;
    justify-content: space-around;
    align-items: center;
    width: 98px;
    height: 35px;
    background-color: #333;
    border: 1px solid #444;
}

.map button {
    width: 16px;
    height: 16px;
}

.map button svg {
    display: block;
    fill: none;
    stroke: #b5b5b5;
}

.map .map-zoom svg {
    stroke: #ccc;
    stroke-width: 2;
}

.map-corner {
    position: absolute;
    right: 7px;
    bottom: 4px;
    display: flex;
    flex-direction: column;
    align-items: flex-end;
    gap: 5px;
}

.map-zoom {
    display: flex;
    flex-direction: column;
    align-items: center;
    justify-content: space-around;
    width: 31px;
    height: 58px;
    background-color: #333;
    border: 1px solid #444;
}

.map-credit {
    margin-right: 3px;
    padding: 0 3px;
    font-size: 14px;
    line-height: 15px;
    background-color: #b2b7b9;
    color: #333;
}

/* chart */
.chart {
    flex: 319;
    min-height: 0;
    display: flex;
    flex-direction: column;
}

.chart svg {
    flex: 1;
    min-height: 0;
    width: 100%;
}

.grid,
.axis {
    fill: none;
    stroke: #383838;
    stroke-dasharray: 4 2;
}

.axis {
    stroke: #666;
    stroke-dasharray: none;
}

.label {
    font-size: 11px;
    fill: #a8a8a8;
}

.axis-title {
    font-size: 12px;
    font-weight: bold;
}

.china-line {
    fill: #ffa500;
    stroke: #ffa500;
}

.other-line {
    fill: #ff0;
    stroke: #ff0;
}

.china-line polyline,
.other-line polyline {
    fill: none;
}

.china-line circle,
.other-line circle {
    stroke: none;
}

.legend {
    display: flex;
    justify-content: center;
    align-items: center;
    gap: 16px;
    height: 47px;
    padding: 0 0 8px 40px;
    font-size: 12px;
}

.key {
    display: flex;
    align-items: center;
    gap: 4px;
}

.key::before {
    content: "";
    width: 16px;
    height: 16px;
    border-radius: 50%;
}

.key.china::before {
    background-color: #ffa500;
}

.key.other::before {
    background-color: #ff0;
}

/* lists with scrollbar */
.scroll-box {
    flex: 1;
    min-height: 0;
    display: flex;
    overflow: hidden;
}

.scroll-box ul {
    flex: 1;
    height: 0;
}

.provinces li {
    display: flex;
    align-items: center;
    height: 51px;
    border-bottom: 1px solid #5c5c5c;
}

.provinces b,
.provinces strong {
    color: #fff;
}

.provinces b {
    font-weight: normal;
}

.dot {
    width: 40px;
    height: 40px;
    margin: 0 5px;
    border-radius: 50%;
    background-color: #e60000;
}

.dot.medium {
    width: 32px;
    height: 32px;
    margin: 0 9px;
}

.dot.small {
    width: 24px;
    height: 24px;
    margin: 0 13px;
}

.dot.tiny {
    width: 14px;
    height: 14px;
    margin: 0 18px;
}

.scroll-box .recoveries {
    display: grid;
    grid-auto-rows: 1fr;
    height: 807px;
}

.recoveries li {
    padding: 4px 0 0 10px;
    border-bottom: 1px solid #5c5c5c;
    color: #70a800;
}

.recoveries span {
    color: #4c7208;
}

.scrollbar {
    width: 16px;
    display: flex;
    flex-direction: column;
    background-color: #f0f0f0;
}

.scrollbar svg {
    width: 16px;
    height: 34px;
    fill: none;
    stroke: #555;
    stroke-width: 2;
}

.track {
    flex: 1;
    padding: 0 1px;
}

.thumb {
    background-color: #cdcdcd;
}

/* info */
.info {
    height: 156px;
    padding: 5px;
    font-size: 15px;
}

.info a {
    color: #1e90ff;
    text-decoration: none;
}
```
